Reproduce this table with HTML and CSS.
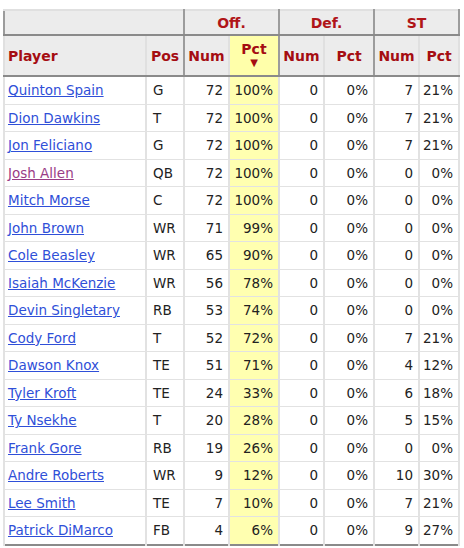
FILE: index.html
```html
<!DOCTYPE html>
<html>
<head>
<meta charset="utf-8">
<link rel="stylesheet" href="styles.css">
</head>
<body>
<table class="snaps">
  <colgroup>
    <col class="c-player"><col class="c-pos"><col class="c-num"><col class="c-pct"><col class="c-num"><col class="c-pct"><col class="c-num"><col class="c-stpct">
  </colgroup>
  <thead>
    <tr class="over">
      <th colspan="2" class="grp"></th>
      <th colspan="2" class="grp">Off.</th>
      <th colspan="2" class="grp">Def.</th>
      <th colspan="2" class="grp">ST</th>
    </tr>
    <tr class="heads">
      <th class="left">Player</th>
      <th class="grpend">Pos</th>
      <th>Num</th>
      <th class="sorted grpend">Pct<span class="arrow">▼</span></th>
      <th>Num</th>
      <th class="grpend">Pct</th>
      <th>Num</th>
      <th>Pct</th>
    </tr>
  </thead>
  <tbody>
    <tr><td><a href="#">Quinton Spain</a></td><td class="pos">G</td><td>72</td><td class="hl">100%</td><td>0</td><td>0%</td><td>7</td><td>21%</td></tr>
    <tr><td><a href="#">Dion Dawkins</a></td><td class="pos">T</td><td>72</td><td class="hl">100%</td><td>0</td><td>0%</td><td>7</td><td>21%</td></tr>
    <tr><td><a href="#">Jon Feliciano</a></td><td class="pos">G</td><td>72</td><td class="hl">100%</td><td>0</td><td>0%</td><td>7</td><td>21%</td></tr>
    <tr><td><a href="#" class="visited">Josh Allen</a></td><td class="pos">QB</td><td>72</td><td class="hl">100%</td><td>0</td><td>0%</td><td>0</td><td>0%</td></tr>
    <tr><td><a href="#">Mitch Morse</a></td><td class="pos">C</td><td>72</td><td class="hl">100%</td><td>0</td><td>0%</td><td>0</td><td>0%</td></tr>
    <tr><td><a href="#">John Brown</a></td><td class="pos">WR</td><td>71</td><td class="hl">99%</td><td>0</td><td>0%</td><td>0</td><td>0%</td></tr>
    <tr><td><a href="#">Cole Beasley</a></td><td class="pos">WR</td><td>65</td><td class="hl">90%</td><td>0</td><td>0%</td><td>0</td><td>0%</td></tr>
    <tr><td><a href="#">Isaiah McKenzie</a></td><td class="pos">WR</td><td>56</td><td class="hl">78%</td><td>0</td><td>0%</td><td>0</td><td>0%</td></tr>
    <tr><td><a href="#">Devin Singletary</a></td><td class="pos">RB</td><td>53</td><td class="hl">74%</td><td>0</td><td>0%</td><td>0</td><td>0%</td></tr>
    <tr><td><a href="#">Cody Ford</a></td><td class="pos">T</td><td>52</td><td class="hl">72%</td><td>0</td><td>0%</td><td>7</td><td>21%</td></tr>
    <tr><td><a href="#">Dawson Knox</a></td><td class="pos">TE</td><td>51</td><td class="hl">71%</td><td>0</td><td>0%</td><td>4</td><td>12%</td></tr>
    <tr><td><a href="#">Tyler Kroft</a></td><td class="pos">TE</td><td>24</td><td class="hl">33%</td><td>0</td><td>0%</td><td>6</td><td>18%</td></tr>
    <tr><td><a href="#">Ty Nsekhe</a></td><td class="pos">T</td><td>20</td><td class="hl">28%</td><td>0</td><td>0%</td><td>5</td><td>15%</td></tr>
    <tr><td><a href="#">Frank Gore</a></td><td class="pos">RB</td><td>19</td><td class="hl">26%</td><td>0</td><td>0%</td><td>0</td><td>0%</td></tr>
    <tr><td><a href="#">Andre Roberts</a></td><td class="pos">WR</td><td>9</td><td class="hl">12%</td><td>0</td><td>0%</td><td>10</td><td>30%</td></tr>
    <tr><td><a href="#">Lee Smith</a></td><td class="pos">TE</td><td>7</td><td class="hl">10%</td><td>0</td><td>0%</td><td>7</td><td>21%</td></tr>
    <tr><td><a href="#">Patrick DiMarco</a></td><td class="pos">FB</td><td>4</td><td class="hl">6%</td><td>0</td><td>0%</td><td>9</td><td>27%</td></tr>
  </tbody>
</table>
</body>
</html>
```
FILE: styles.css
```css
html, body {
  margin: 0;
  padding: 0;
  background: #ffffff;
}
body {
  padding: 9px 0 0 3px;
  font-family: "DejaVu Sans", Verdana, sans-serif;
  font-size: 13.5px;
  color: #222;
}
.snaps {
  border-collapse: collapse;
  border: 2px solid #8a8a8a;
  table-layout: fixed;
  width: 457px;
}
.c-player { width: 142px; }
.c-pos { width: 38px; }
.c-num { width: 45px; }
.c-pct { width: 50px; }
.c-stpct { width: 40px; }

th {
  background: #ececec;
  color: #a50d12;
  font-weight: bold;
  font-size: 14px;
  padding: 0 3px;
  text-align: center;
  border: 2px solid #e0e0e0;
}
.over th {
  height: 23px;
  border-left: 2px solid #9c9c9c;
  border-right: 2px solid #9c9c9c;
  border-bottom: 2px solid #8a8a8a;
  color: #b01518;
}
.heads th {
  height: 39px;
  border-bottom: 2px solid #8a8a8a;
  border-top: 2px solid #8a8a8a;
}
.heads th.grpend {
  border-right: 2px solid #9c9c9c;
}
.heads th.left {
  text-align: left;
  padding-left: 3px;
}
.heads th.sorted {
  background: #ffffaa;
  line-height: 15px;
}
.arrow {
  display: block;
  font-size: 10px;
  line-height: 12px;
}
td {
  height: 26.5px;
  padding: 0 5px 0 3px;
  text-align: right;
  border-left: 2px solid #e2e2e2;
  border-right: 2px solid #e2e2e2;
  border-bottom: 1px solid #e2e2e2;
  white-space: nowrap;
}
td:first-child, td.pos {
  text-align: left;
}
td.pos {
  padding-left: 6px;
}
td.hl {
  background: #ffffb0;
}
a {
  color: #2f4fd8;
  text-decoration: underline;
}
a.visited {
  color: #9a3c86;
}
```
